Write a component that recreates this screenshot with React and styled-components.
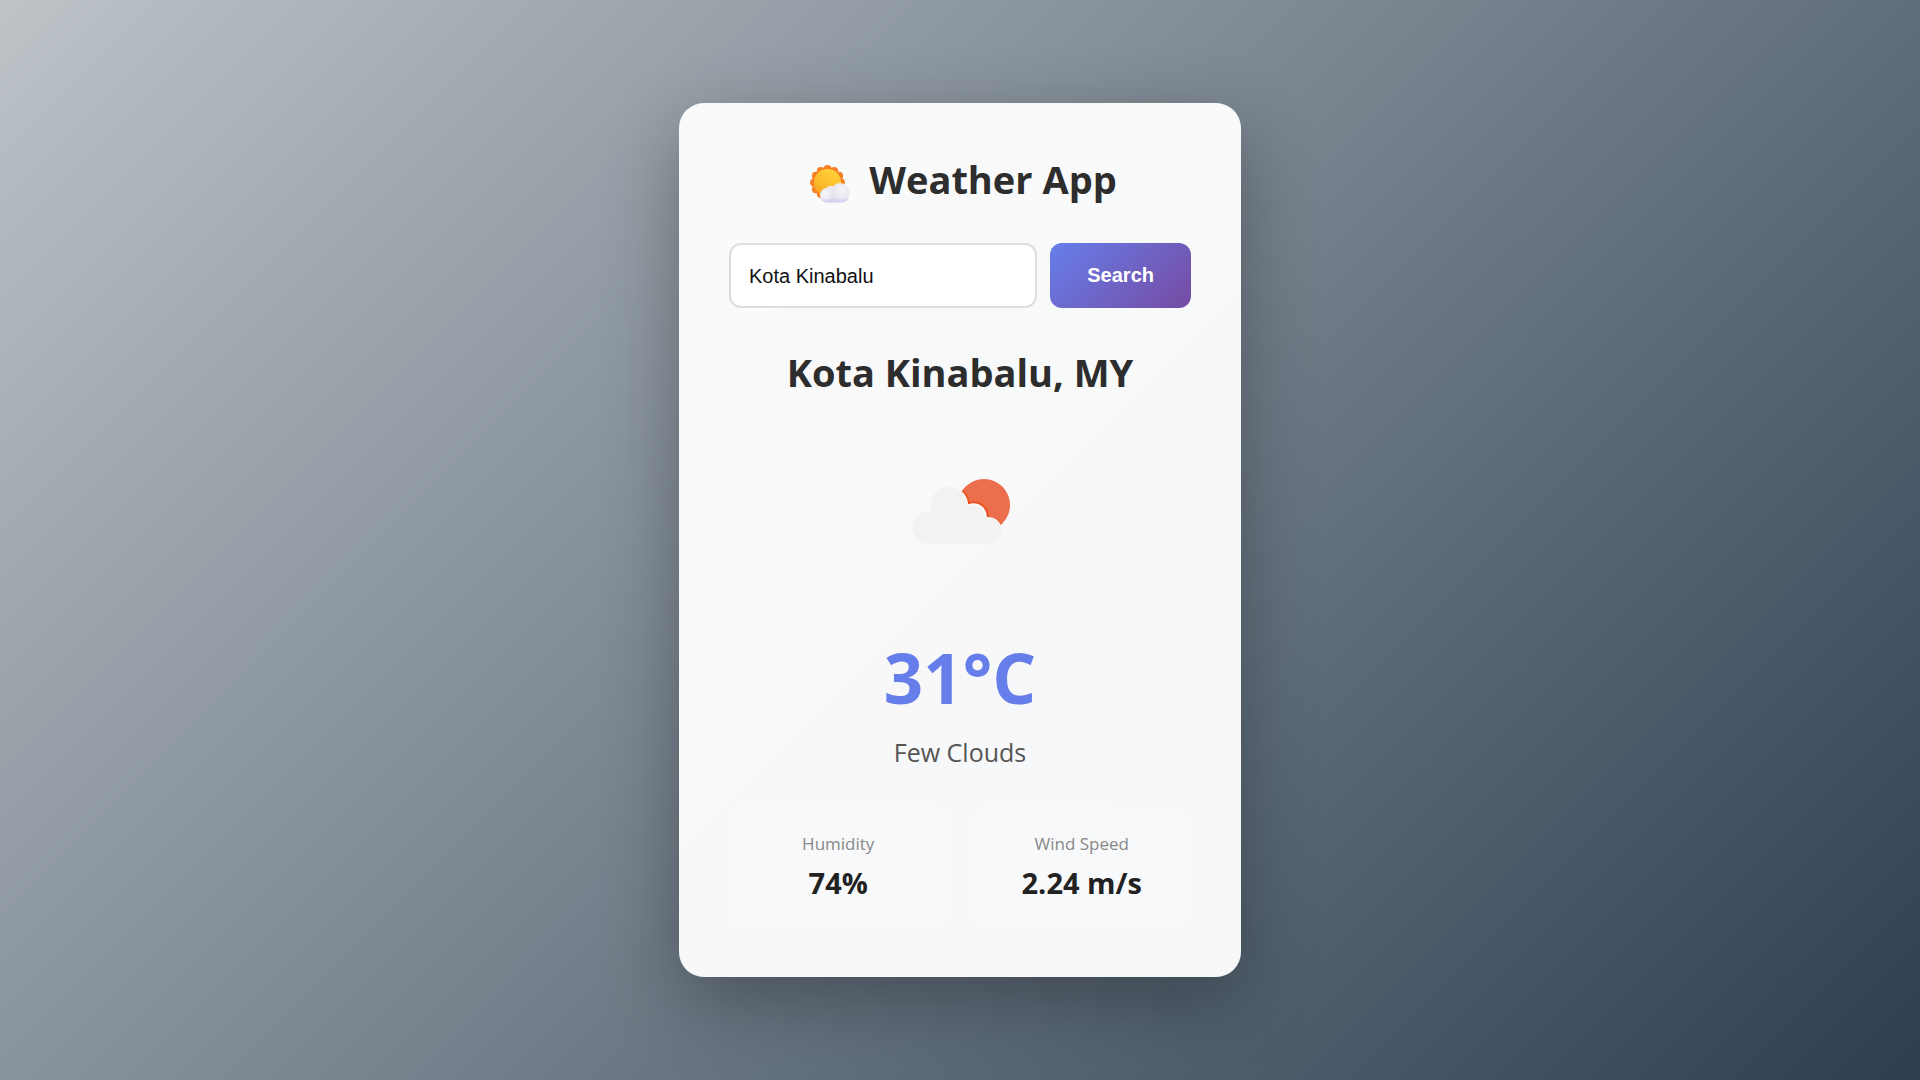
import React, { useState } from "react";
import styled, { createGlobalStyle } from "styled-components";

const GlobalStyle = createGlobalStyle`
  *, *::before, *::after { box-sizing: border-box; }
  body {
    margin: 0;
    font-family: "Segoe UI", "Open Sans", "Noto Sans", sans-serif;
    color: #2d2d2d;
  }
`;

const Page = styled.main`
  min-height: 100vh;
  display: flex;
  align-items: center;
  justify-content: center;
  padding: 24px;
  background: linear-gradient(135deg, #bdc3c7, #2c3e50);
`;

const Card = styled.section`
  width: 100%;
  max-width: 562px;
  padding: 50px;
  border-radius: 25px;
  background: rgba(255, 255, 255, 0.95);
  box-shadow: 0 25px 75px rgba(0, 0, 0, 0.3);
  text-align: center;
`;

const Title = styled.h1`
  display: flex;
  align-items: center;
  justify-content: center;
  gap: 19px;
  margin: 0 0 37px;
  font-size: 38px;
  line-height: 53px;
  font-weight: 700;
`;

const SearchForm = styled.form`
  display: flex;
  gap: 13px;
  margin-bottom: 38px;
`;

const CityInput = styled.input`
  flex: 1;
  min-width: 0;
  padding: 18px;
  border: 2px solid #ddd;
  border-radius: 12px;
  background: #fff;
  color: #111;
  font: 20px/24px "Liberation Sans", Arial, sans-serif;
  outline: none;
`;

const SearchButton = styled.button`
  padding: 20px 37px;
  border: 0;
  border-radius: 12px;
  background: linear-gradient(135deg, #667eea, #764ba2);
  color: #fff;
  font: 700 20px/25px "Liberation Sans", Arial, sans-serif;
  cursor: pointer;
`;

const City = styled.h2`
  margin: 0 0 19px;
  font-size: 38px;
  line-height: 53px;
  font-weight: 700;
`;

const Condition = styled.svg`
  display: block;
  width: 188px;
  height: 188px;
  margin: 0 auto 25px;
`;

const Temperature = styled.p`
  margin: 0 0 12px;
  color: #667eea;
  font-size: 69px;
  line-height: 93px;
  font-weight: 700;
`;

const Description = styled.p`
  margin: 0 0 38px;
  color: #555;
  font-size: 25px;
  line-height: 33px;
`;

const Details = styled.dl`
  display: grid;
  grid-template-columns: 1fr 1fr;
  gap: 25px;
  margin: 0;
`;

const Detail = styled.div`
  padding: 25px 12px;
  border-radius: 15px;
  background: #f8f9fb;
`;

const Label = styled.dt`
  margin-bottom: 8px;
  color: #888;
  font-size: 17px;
  line-height: 24px;
`;

const Value = styled.dd`
  margin: 0;
  color: #222;
  font-size: 29px;
  line-height: 38px;
  font-weight: 700;
`;

const petals = Array.from({ length: 12 }, (_, i) => {
  const a = (i * Math.PI) / 6;
  return [17.5 + 13.4 * Math.sin(a), 17.5 - 13.4 * Math.cos(a)];
});

function SunnyIcon() {
  return (
    <svg width="47" height="46" viewBox="-7 -8 47 46" aria-hidden="true">
      <defs>
        <linearGradient id="sun" x1="0.8" y1="0" x2="0.2" y2="1">
          <stop offset="0" stopColor="#ffd13b" />
          <stop offset="0.6" stopColor="#fbbd2b" />
          <stop offset="1" stopColor="#f7a223" />
        </linearGradient>
        <linearGradient id="puff" x1="0" y1="0" x2="0" y2="1">
          <stop offset="0" stopColor="#f0edf4" />
          <stop offset="0.6" stopColor="#e3e1ec" />
          <stop offset="1" stopColor="#d5cdf0" />
        </linearGradient>
        <radialGradient id="puffLeft" cx="0.4" cy="0.45" r="0.6">
          <stop offset="0" stopColor="#f8f7fb" />
          <stop offset="1" stopColor="#e6e3ee" />
        </radialGradient>
        <radialGradient id="puffRight" cx="0.6" cy="0.35" r="0.65">
          <stop offset="0" stopColor="#f6f5f9" />
          <stop offset="1" stopColor="#e3e0ec" />
        </radialGradient>
      </defs>
      <g fill="#f88124">
        {petals.map(([x, y]) => (
          <circle key={`${x}-${y}`} cx={x} cy={y} r="4" />
        ))}
      </g>
      <circle cx="17.5" cy="17.5" r="13.6" fill="url(#sun)" />
      <rect x="10" y="24" width="29" height="13.500" rx="6.700" fill="url(#puff)" />
      <circle cx="20.500" cy="26" r="5" fill="#efedf3" />
      <circle cx="30" cy="27.300" r="9.400" fill="url(#puffRight)" />
      <circle cx="16.700" cy="29.500" r="6.500" fill="url(#puffLeft)" />
      <path d="M12 34.500h24c-1.500 2-3 3-6 3H17c-2 0-3.500-1-5-3z" fill="#d5cdf0" opacity="0.6" />
    </svg>
  );
}

function FewCloudsIcon() {
  return (
    <Condition viewBox="0 0 188 188" role="img" aria-label="Few clouds">
      <defs>
        <clipPath id="sunDisc">
          <circle cx="118" cy="87" r="26" />
        </clipPath>
      </defs>
      <circle cx="118" cy="87" r="26" fill="#ec6e4c" />
      <g clipPath="url(#sunDisc)">
        <g fill="#ea4f1c">
          <circle cx="82.500" cy="88" r="21.500" />
          <circle cx="108" cy="98" r="14.500" />
          <circle cx="121.500" cy="115" r="16.500" />
        </g>
        <g fill="#f9faf9">
          <circle cx="82" cy="88" r="20.300" />
          <circle cx="107.500" cy="98.500" r="13.300" />
          <circle cx="121" cy="115.500" r="15.300" />
        </g>
      </g>
      <g fill="#f2f2f1">
        <circle cx="62.500" cy="109.500" r="16.500" />
        <circle cx="83" cy="87" r="18" />
        <circle cx="107" cy="99" r="11.500" />
        <circle cx="122.500" cy="112.500" r="13.500" />
        <path d="M62.500 93h3L83 84l17 6 17 20 5.500 16h-60z" />
      </g>
    </Condition>
  );
}

const details = [
  { label: "Humidity", value: "74%" },
  { label: "Wind Speed", value: "2.24 m/s" },
];

export default function App() {
  const [city, setCity] = useState("Kota Kinabalu");

  return (
    <>
      <GlobalStyle />
      <Page>
        <Card>
          <Title>
            <SunnyIcon />
            Weather App
          </Title>
          <SearchForm onSubmit={(event) => event.preventDefault()}>
            <CityInput
              type="text"
              aria-label="City"
              value={city}
              onChange={(event) => setCity(event.target.value)}
            />
            <SearchButton type="submit">Search</SearchButton>
          </SearchForm>
          <City>Kota Kinabalu, MY</City>
          <FewCloudsIcon />
          <Temperature>31°C</Temperature>
          <Description>Few Clouds</Description>
          <Details>
            {details.map(({ label, value }) => (
              <Detail key={label}>
                <Label>{label}</Label>
                <Value>{value}</Value>
              </Detail>
            ))}
          </Details>
        </Card>
      </Page>
    </>
  );
}
